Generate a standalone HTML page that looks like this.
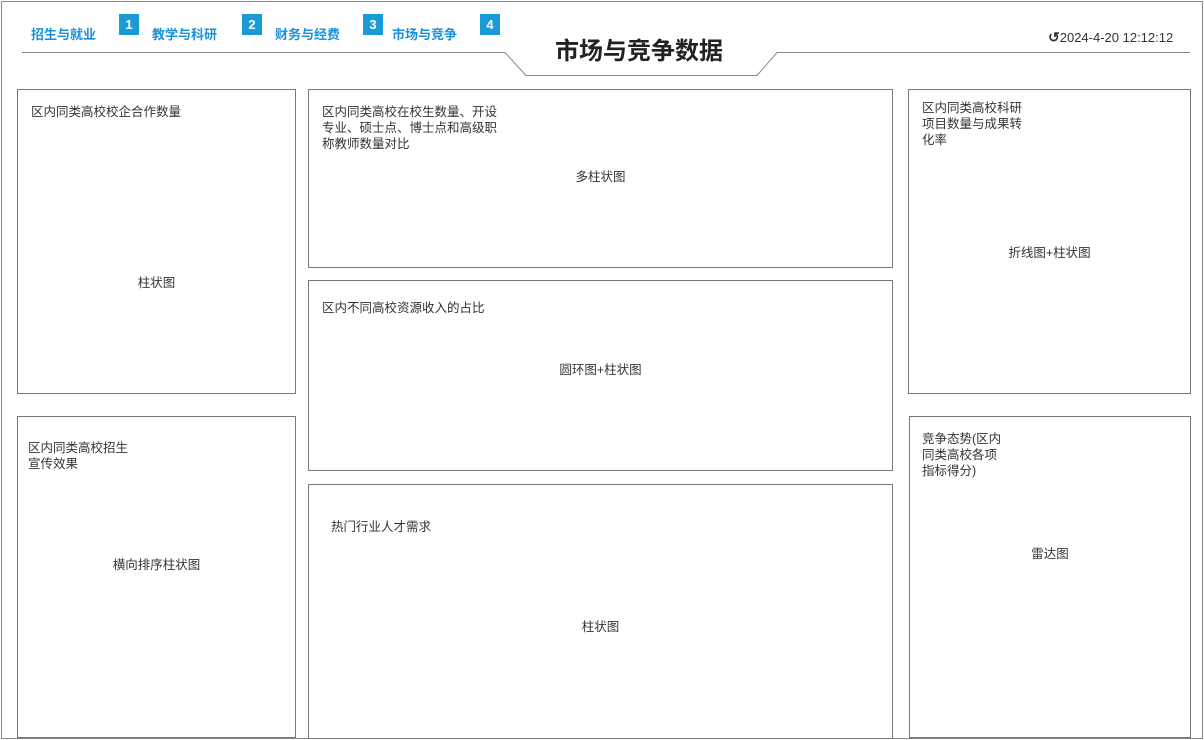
<!DOCTYPE html>
<html><head><meta charset="utf-8"><style>
*{margin:0;padding:0;box-sizing:border-box}
body{width:1204px;height:740px;background:#fff;position:relative;overflow:hidden;font-family:"Liberation Sans","Noto Sans CJK SC",sans-serif;color:#333;font-size:13px}
.frame{position:absolute;left:1px;top:1px;width:1202px;height:738px;border:1px solid #888}
.nav{position:absolute;top:24px;color:#1a90d8;font-size:13px;font-weight:bold}
.b{position:absolute;top:14px;width:20px;height:21px;background:#1a9ad6;color:#fff;font-size:13px;text-align:center;line-height:21px;font-weight:bold}
.p{position:absolute;border:1px solid #777}
.t{position:absolute;font-size:12.5px;line-height:16px;color:#333}
.c{position:absolute;font-size:12.5px;width:100%;text-align:center;left:0}
</style></head><body>
<div class="frame"></div>
<div class="nav" style="left:31px">招生与就业</div>
<div class="b" style="left:119px">1</div>
<div class="nav" style="left:152px">教学与科研</div>
<div class="b" style="left:242px">2</div>
<div class="nav" style="left:275px">财务与经费</div>
<div class="b" style="left:363px">3</div>
<div class="nav" style="left:392px">市场与竞争</div>
<div class="b" style="left:480px">4</div>
<svg style="position:absolute;left:0;top:0" width="1204" height="90"><polyline points="22,52.5 505,52.5 526,75.5 757,75.5 777,52.5 1190,52.5" fill="none" stroke="#888" stroke-width="1"/></svg>
<div style="position:absolute;left:555px;top:31px;font-size:24px;font-weight:bold;color:#222">市场与竞争数据</div>
<div style="position:absolute;left:1048px;top:29px;font-size:13px;color:#333"><b style="font-size:14px">↺</b>2024-4-20 12:12:12</div>

<div class="p" style="left:17px;top:89px;width:279px;height:305px"><div class="t" style="left:13px;top:14px">区内同类高校校企合作数量</div><div class="c" style="top:182px">柱状图</div></div>
<div class="p" style="left:17px;top:416px;width:279px;height:322px"><div class="t" style="left:10px;top:23px">区内同类高校招生<br>宣传效果</div><div class="c" style="top:137px">横向排序柱状图</div></div>
<div class="p" style="left:308px;top:89px;width:585px;height:179px"><div class="t" style="left:13px;top:14px">区内同类高校在校生数量、开设<br>专业、硕士点、博士点和高级职<br>称教师数量对比</div><div class="c" style="top:76px">多柱状图</div></div>
<div class="p" style="left:308px;top:280px;width:585px;height:191px"><div class="t" style="left:13px;top:19px">区内不同高校资源收入的占比</div><div class="c" style="top:78px">圆环图+柱状图</div></div>
<div class="p" style="left:308px;top:484px;width:585px;height:255px"><div class="t" style="left:22px;top:34px">热门行业人才需求</div><div class="c" style="top:131px">柱状图</div></div>
<div class="p" style="left:908px;top:89px;width:283px;height:305px"><div class="t" style="left:13px;top:10px">区内同类高校科研<br>项目数量与成果转<br>化率</div><div class="c" style="top:152px">折线图+柱状图</div></div>
<div class="p" style="left:909px;top:416px;width:282px;height:322px"><div class="t" style="left:12px;top:14px">竞争态势(区内<br>同类高校各项<br>指标得分)</div><div class="c" style="top:126px">雷达图</div></div>
</body></html>
